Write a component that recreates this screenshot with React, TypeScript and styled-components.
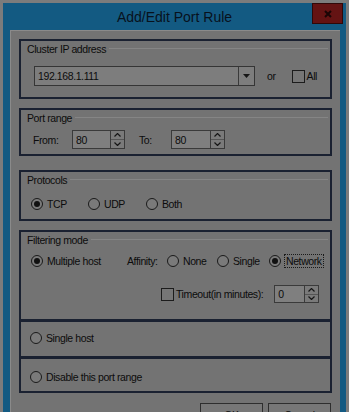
import styled, { createGlobalStyle } from "styled-components";

const GlobalStyle = createGlobalStyle`
  html, body { margin: 0; padding: 0; }
  body {
    background: #7c7c7c;
    font-family: "Liberation Sans", Arial, sans-serif;
    font-size: 10.5px;
    letter-spacing: -0.4px;
    color: #0c0c0c;
    overflow: hidden;
  }
`;

const Window = styled.div`
  margin: 3px 0 0 3px;
  width: 343px;
  height: 409px;
  background: #135a82;
  display: flex;
  flex-direction: column;
  overflow: hidden;
`;

const TitleBar = styled.div`
  height: 27px;
  flex: none;
  display: grid;
  grid-template-columns: 1fr auto 1fr;
  align-items: center;
`;

const TitleText = styled.span`
  grid-column: 2;
  font-size: 14px;
  letter-spacing: 0;
  color: #08111c;
  padding-top: 1px;
`;

const CloseButton = styled.div`
  grid-column: 3;
  justify-self: end;
  align-self: start;
  margin-right: 3px;
  width: 31px;
  height: 21px;
  box-sizing: border-box;
  background: #641313;
  border: 1px solid #300808;
  display: flex;
  align-items: center;
  justify-content: center;
`;

const Body = styled.div`
  flex: 1;
  margin: 0 6px 0 7px;
  background: #737373;
  border-top: 1px solid #8a8a8a;
  border-left: 1px solid #8a8a8a;
  padding: 8px 8px 0 8px;
  display: flex;
  flex-direction: column;
  overflow: hidden;
`;

const Group = styled.div<{ $h: number; $mt?: number }>`
  height: ${(p) => p.$h}px;
  margin-top: ${(p) => p.$mt ?? 0}px;
  flex: none;
  box-sizing: border-box;
  border: 2px solid #1a2131;
  padding: 1px 6px 0 6px;
  display: flex;
  flex-direction: column;
`;

const LabelRow = styled.div`
  display: flex;
  align-items: center;
  height: 13px;
  gap: 3px;
`;

const Legend = styled.span`
  white-space: nowrap;
`;

const Rule = styled.span`
  flex: 1;
  height: 1px;
  background: #858585;
  margin-right: -4px;
`;

const Row = styled.div<{ $mt?: number; $pl?: number; $h?: number }>`
  display: flex;
  align-items: center;
  margin-top: ${(p) => p.$mt ?? 0}px;
  padding-left: ${(p) => p.$pl ?? 0}px;
  height: ${(p) => p.$h ?? 20}px;
  white-space: nowrap;
`;

const Combo = styled.div`
  width: 221px;
  height: 20px;
  box-sizing: border-box;
  border: 1px solid #353535;
  background: #7d7d7d;
  display: flex;
  align-items: center;
`;

const ComboText = styled.span`
  flex: 1;
  padding-left: 3px;
`;

const ComboButton = styled.span`
  width: 15px;
  height: 100%;
  border-left: 1px solid #3a3a3a;
  display: flex;
  align-items: center;
  justify-content: center;
`;

const Plain = styled.span<{ $ml?: number; $w?: number }>`
  margin-left: ${(p) => p.$ml ?? 0}px;
  ${(p) => (p.$w ? `width: ${p.$w}px;` : "")}
  flex: none;
`;

const Box = styled.span<{ $ml?: number }>`
  width: 13px;
  height: 13px;
  box-sizing: border-box;
  border: 1px solid #1c1c1c;
  background: #767676;
  margin-left: ${(p) => p.$ml ?? 0}px;
  margin-right: 2px;
  flex: none;
`;

const SpinField = styled.div<{ $h?: number; $ml?: number }>`
  display: flex;
  margin-left: ${(p) => p.$ml ?? 0}px;
  height: ${(p) => p.$h ?? 19}px;
  flex: none;
`;

const SpinInput = styled.span<{ $w: number }>`
  width: ${(p) => p.$w}px;
  box-sizing: border-box;
  border: 1px solid #3a3a3a;
  border-right: none;
  background: #7f7f7f;
  padding-left: 3px;
  display: flex;
  align-items: center;
`;

const Spinner = styled.span`
  width: 15px;
  box-sizing: border-box;
  border: 1px solid #3a3a3a;
  display: flex;
  flex-direction: column;
`;

const SpinHalf = styled.span<{ $top?: boolean }>`
  flex: 1;
  display: flex;
  align-items: center;
  justify-content: center;
  background: #7a7a7a;
  border-bottom: ${(p) => (p.$top ? "1px solid #555" : "none")};
`;

const Option = styled.label<{ $w?: number }>`
  display: flex;
  align-items: center;
  gap: 4px;
  ${(p) => (p.$w ? `width: ${p.$w}px;` : "")}
  flex: none;
`;

const Radio = styled.span<{ $on?: boolean }>`
  width: 12px;
  height: 12px;
  box-sizing: border-box;
  border-radius: 50%;
  border: 1px solid #1a1a1a;
  background: #7a7a7a;
  display: flex;
  align-items: center;
  justify-content: center;
  flex: none;
  &::after {
    content: "";
    width: 6px;
    height: 6px;
    border-radius: 50%;
    background: #111;
    display: ${(p) => (p.$on ? "block" : "none")};
  }
`;

const Focused = styled.span`
  outline: 1px dotted #1a1a1a;
  padding: 0 1px;
`;

const Buttons = styled.div`
  display: flex;
  justify-content: flex-end;
  gap: 5px;
  margin-top: 10px;
  padding-right: 1px;
`;

const Button = styled.div`
  width: 63px;
  height: 23px;
  box-sizing: border-box;
  border: 1px solid #2e2e2e;
  background: #777;
  display: flex;
  align-items: center;
  justify-content: center;
`;

const Chevron = ({ up }: { up?: boolean }) => (
  <svg width="7" height="4" viewBox="0 0 7 4">
    <path
      d={up ? "M0.5 3.5 L3.5 0.5 L6.5 3.5" : "M0.5 0.5 L3.5 3.5 L6.5 0.5"}
      fill="none"
      stroke="#161616"
      strokeWidth="1.2"
    />
  </svg>
);

const Spin = ({ value, w, ml, h }: { value: string; w: number; ml?: number; h?: number }) => (
  <SpinField $ml={ml} $h={h}>
    <SpinInput $w={w}>{value}</SpinInput>
    <Spinner>
      <SpinHalf $top>
        <Chevron up />
      </SpinHalf>
      <SpinHalf>
        <Chevron />
      </SpinHalf>
    </Spinner>
  </SpinField>
);

export default function App() {
  return (
    <>
      <GlobalStyle />
      <Window>
        <TitleBar>
          <TitleText>Add/Edit Port Rule</TitleText>
          <CloseButton>
            <svg width="8" height="8" viewBox="0 0 8 8">
              <path d="M1 1 L7 7 M7 1 L1 7" stroke="#1a0505" strokeWidth="2" />
            </svg>
          </CloseButton>
        </TitleBar>
        <Body>
          <Group $h={60}>
            <LabelRow>
              <Legend>Cluster IP address</Legend>
              <Rule />
            </LabelRow>
            <Row $mt={11} $pl={7}>
              <Combo>
                <ComboText>192.168.1.111</ComboText>
                <ComboButton>
                  <svg width="7" height="4" viewBox="0 0 7 4">
                    <path d="M0 0 L7 0 L3.5 4 Z" fill="#161616" />
                  </svg>
                </ComboButton>
              </Combo>
              <Plain $ml={12}>or</Plain>
              <Box $ml={16} />
              <Plain>All</Plain>
            </Row>
          </Group>

          <Group $h={48} $mt={9}>
            <LabelRow>
              <Legend>Port range</Legend>
              <Rule />
            </LabelRow>
            <Row $mt={6} $pl={6} $h={19}>
              <Plain $w={39}>From:</Plain>
              <Spin value="80" w={38} />
              <Plain $ml={14} $w={32}>To:</Plain>
              <Spin value="80" w={39} />
            </Row>
          </Group>

          <Group $h={51} $mt={14}>
            <LabelRow>
              <Legend>Protocols</Legend>
              <Rule />
            </LabelRow>
            <Row $mt={10} $pl={4} $h={16}>
              <Option $w={57}>
                <Radio $on />
                TCP
              </Option>
              <Option $w={58}>
                <Radio />
                UDP
              </Option>
              <Option>
                <Radio />
                Both
              </Option>
            </Row>
          </Group>

          <Group $h={91} $mt={9}>
            <LabelRow>
              <Legend>Filtering mode</Legend>
              <Rule />
            </LabelRow>
            <Row $mt={7} $pl={4} $h={16}>
              <Option $w={96}>
                <Radio $on />
                Multiple host
              </Option>
              <Plain $w={40}>Affinity:</Plain>
              <Option $w={50}>
                <Radio />
                None
              </Option>
              <Option $w={52}>
                <Radio />
                Single
              </Option>
              <Option>
                <Radio $on />
                <Focused>Network</Focused>
              </Option>
            </Row>
            <Row $mt={16} $pl={134} $h={18}>
              <Box />
              <Plain>Timeout(in minutes):</Plain>
              <Spin value="0" w={30} h={18} ml={11} />
            </Row>
          </Group>

          <Group $h={38} $mt={-1}>
            <Row $mt={7} $pl={3} $h={16}>
              <Option>
                <Radio />
                Single host
              </Option>
            </Row>
          </Group>

          <Group $h={36} $mt={-1}>
            <Row $mt={9} $pl={3} $h={16}>
              <Option>
                <Radio />
                Disable this port range
              </Option>
            </Row>
          </Group>

          <Buttons>
            <Button>OK</Button>
            <Button>Cancel</Button>
          </Buttons>
        </Body>
      </Window>
    </>
  );
}
